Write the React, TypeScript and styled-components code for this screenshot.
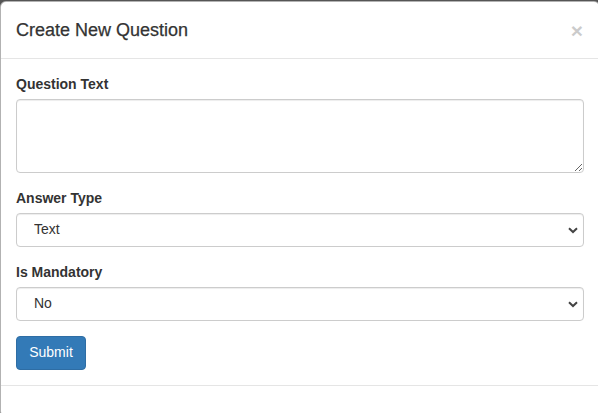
import styled, { createGlobalStyle } from "styled-components";

const GlobalStyle = createGlobalStyle`
  html, body {
    margin: 0;
    padding: 0;
    height: 100%;
    overflow: hidden;
    background: #555;
  }
  body {
    padding-top: 1px;
    font-family: "Liberation Sans", Arial, sans-serif;
    font-size: 14px;
    line-height: 1.42857;
    color: #333;
  }
  * {
    box-sizing: border-box;
  }
`;

const Modal = styled.div`
  width: 600px;
  height: 416px;
  background: #fff;
  border: 1px solid rgba(0, 0, 0, 0.3);
  border-radius: 6px;
`;

const Header = styled.div`
  display: flex;
  align-items: center;
  justify-content: space-between;
  padding: 15px;
  border-bottom: 1px solid #e5e5e5;
`;

const Title = styled.h4`
  margin: 0;
  font-size: 18px;
  font-weight: 500;
  line-height: 26px;
  color: #333;
  -webkit-text-stroke: 0.25px #333;
`;

const Close = styled.button`
  margin: 0 1px 0 0;
  padding: 0;
  border: 0;
  background: transparent;
  font-family: "Liberation Sans", Arial, sans-serif;
  font-size: 21px;
  font-weight: 700;
  line-height: 1;
  color: #000;
  opacity: 0.2;
  cursor: pointer;
`;

const Body = styled.form`
  display: flex;
  flex-direction: column;
  align-items: flex-start;
  padding: 15px 15px 15px 15px;
  border-bottom: 1px solid #e5e5e5;
`;

const Group = styled.div`
  display: flex;
  flex-direction: column;
  align-self: stretch;
  margin-bottom: 15px;
`;

const Label = styled.label`
  margin-bottom: 5px;
  font-weight: 700;
  line-height: 20px;
`;

const TextArea = styled.textarea`
  display: block;
  height: 74px;
  padding: 6px 12px;
  border: 1px solid #ccc;
  border-radius: 4px;
  box-shadow: inset 0 1px 1px rgba(0, 0, 0, 0.075);
  font: inherit;
  color: #555;
  resize: vertical;
`;

const Select = styled.select`
  appearance: none;
  display: block;
  height: 34px;
  padding: 6px 30px 6px 17px;
  border: 1px solid #ccc;
  border-radius: 4px;
  background: #fff
    url("data:image/svg+xml;utf8,<svg xmlns='http://www.w3.org/2000/svg' width='10' height='7' viewBox='0 0 10 7'><path d='M1 1.2 L5 5 L9 1.2' fill='none' stroke='%23444' stroke-width='2'/></svg>")
    no-repeat right 5px center;
  box-shadow: inset 0 1px 1px rgba(0, 0, 0, 0.075);
  font: inherit;
  color: #333;
`;

const Button = styled.button`
  width: 70px;
  height: 34px;
  padding: 6px 12px;
  border: 1px solid #2e6da4;
  border-radius: 4px;
  background: #337ab7;
  color: #fff;
  font: inherit;
  cursor: pointer;
`;

export default function App() {
  return (
    <>
      <GlobalStyle />
      <Modal>
        <Header>
          <Title>Create New Question</Title>
          <Close type="button">×</Close>
        </Header>
        <Body onSubmit={(e) => e.preventDefault()}>
          <Group>
            <Label>Question Text</Label>
            <TextArea rows={3} />
          </Group>
          <Group>
            <Label>Answer Type</Label>
            <Select defaultValue="text">
              <option value="text">Text</option>
            </Select>
          </Group>
          <Group>
            <Label>Is Mandatory</Label>
            <Select defaultValue="no">
              <option value="no">No</option>
              <option value="yes">Yes</option>
            </Select>
          </Group>
          <Button type="submit">Submit</Button>
        </Body>
      </Modal>
    </>
  );
}
